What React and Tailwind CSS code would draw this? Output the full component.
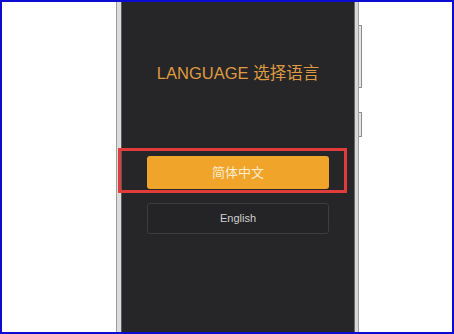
import React from "react";

const cjk = {
  fontFamily: '"Liberation Sans", "Noto Sans CJK SC", sans-serif',
};

function SideButtons() {
  return (
    <div className="flex w-[3px] flex-col">
      <div className="mt-[23px] h-[63px] rounded-r-[1px] border-y border-r border-[#8c8c8c] bg-[#e4e4e4]" />
      <div className="mt-[24px] h-[25px] rounded-r-[1px] border-y border-r border-[#8c8c8c] bg-[#e4e4e4]" />
    </div>
  );
}

function Screen() {
  return (
    <div className="flex w-[232px] flex-col items-center bg-[#262628] pt-[60px]" style={cjk}>
      <h1 className="text-[16.5px] leading-[22px] text-[#df9a40]">LANGUAGE 选择语言</h1>
      <button className="mt-[72px] flex h-[33px] w-[182px] items-center justify-center rounded-[3px] bg-[#f0a52a] text-[13px] text-[#fcecd0]">
        简体中文
      </button>
      <button className="mt-[14px] flex h-[31px] w-[182px] items-center justify-center rounded-[3px] border border-[#3d3d3f] bg-[#242426] text-[11px] text-[#cfcfcf]">
        English
      </button>
    </div>
  );
}

export default function App() {
  return (
    <div className="relative h-[334px] w-[454px] overflow-hidden border-2 border-[#0b0bd2] bg-white">
      <div className="ml-[114px] flex h-full">
        <div className="w-[1px] bg-[#9c9c9c]" />
        <div className="w-[4px] bg-[#dcdcdc]" />
        <div className="w-[1px] bg-[#5a5a5a]" />
        <Screen />
        <div className="w-[1px] bg-[#6a6a6a]" />
        <div className="w-[3px] bg-[#d8d8d8]" />
        <div className="w-[1px] bg-[#a0a0a0]" />
        <SideButtons />
      </div>
      {/* highlight annotation */}
      <div className="absolute left-[116px] top-[146px] h-[45px] w-[229px] border-[3px] border-[#e23b3b]" />
    </div>
  );
}
